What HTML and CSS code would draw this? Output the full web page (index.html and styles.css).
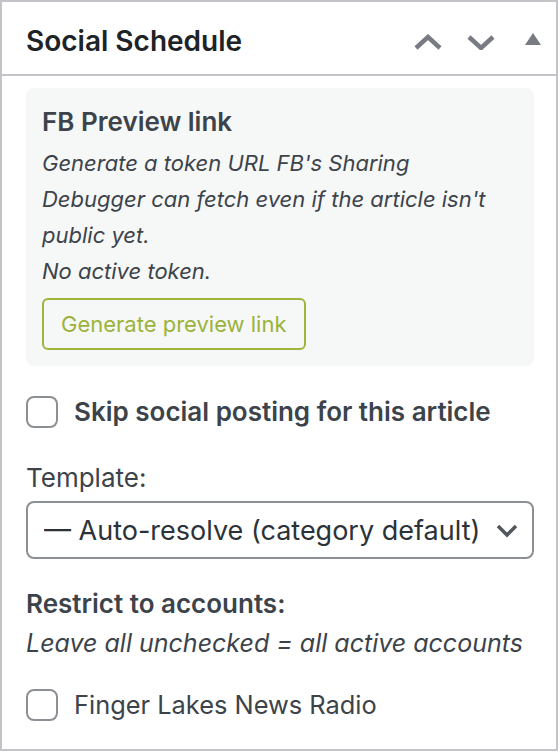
FILE: index.html
```html
<!DOCTYPE html>
<html lang="en">
<head>
    <meta charset="utf-8" />
    <meta name="viewport" content="width=device-width, initial-scale=1" />
    <title>Social Schedule</title>
    <link rel="stylesheet" href="styles.css">
</head>
<body>
    <div class="postbox">
        <div class="postbox-header">
            <h2 class="hndle">Social Schedule</h2>
            <div class="handle-actions">
                <svg class="icon-chev" width="30" height="16" viewBox="0 0 30 16"><polyline points="3,14 15,3 27,14" /></svg>
                <svg class="icon-chev" width="30" height="16" viewBox="0 0 30 16"><polyline points="3,3 15,14 27,3" /></svg>
                <svg class="icon-tri" width="16" height="13" viewBox="0 0 16 13"><polygon points="8,0 16,12 0,12" /></svg>
            </div>
        </div>
        <div class="inside">
            <div class="preview-panel">
                <h4 class="panel-title">FB Preview link</h4>
                <p class="desc">Generate a token URL FB's Sharing Debugger can fetch even if the article isn't public yet.</p>
                <p class="desc">No active token.</p>
                <button type="button" class="btn-preview">Generate preview link</button>
            </div>

            <label class="check-row skip-row">
                <input type="checkbox" name="skip_social">
                <span class="skip-label">Skip social posting for this article</span>
            </label>

            <label class="field-label" for="template">Template:</label>
            <div class="select-wrap">
                <select id="template" name="template">
                    <option>— Auto-resolve (category default)</option>
                </select>
                <svg class="select-arrow" width="22" height="14" viewBox="0 0 22 14"><polyline points="2,2 11,11 20,2" /></svg>
            </div>

            <p class="section-label">Restrict to accounts:</p>
            <p class="desc desc-accounts">Leave all unchecked = all active accounts</p>

            <label class="check-row account-row">
                <input type="checkbox" name="accounts[]" value="flnr">
                <span>Finger Lakes News Radio</span>
            </label>
        </div>
    </div>
</body>
</html>
```

FILE: styles.css
```css
body {
    margin: 0;
    background-color: #fff;
    color: #1d2327;
    font-family: Inter, "Open Sans", sans-serif;
}

.postbox {
    width: 558px;
    height: 751px;
    box-sizing: border-box;
    border: 2px solid #c3c4c7;
    background-color: #fff;
}

.postbox-header {
    display: flex;
    align-items: center;
    justify-content: space-between;
    box-sizing: border-box;
    height: 74px;
    padding: 5px 15px 0 24px;
    border-bottom: 2px solid #c3c4c7;
}

.hndle {
    margin: 0;
    font-size: 28px;
    font-weight: 600;
    line-height: 40px;
    color: #1d2327;
}

.handle-actions {
    display: flex;
    align-items: center;
    padding-top: 2px;
}

.icon-chev {
    fill: none;
    stroke: #787c82;
    stroke-width: 4.5;
}

.icon-chev + .icon-chev {
    margin-left: 23px;
}

.icon-tri {
    fill: #787c82;
    margin-left: 29px;
    margin-top: -5px;
}

.inside {
    padding: 12px 22px 24px 24px;
}

.preview-panel {
    background-color: #f6f7f7;
    border-radius: 8px;
    padding: 16px;
    color: #3c434a;
}

.panel-title {
    margin: 0 0 5px;
    font-size: 26px;
    font-weight: 600;
    line-height: 36px;
}

.desc {
    margin: 0;
    font-size: 22px;
    font-style: italic;
    line-height: 36px;
}

.btn-preview {
    display: block;
    margin-top: 9px;
    height: 52px;
    padding: 0 17px;
    border: 2px solid #a0b43c;
    border-radius: 6px;
    background-color: #f6f7f7;
    color: #9cb33b;
    font-family: inherit;
    font-size: 22px;
    cursor: pointer;
}

.check-row {
    display: flex;
    align-items: center;
    gap: 16px;
    color: #3c434a;
    font-size: 26px;
    line-height: 32px;
}

.check-row input {
    appearance: none;
    width: 32px;
    height: 32px;
    margin: 0;
    border: 2px solid #8c8f94;
    border-radius: 8px;
    background-color: #fff;
}

.skip-row {
    margin-top: 30px;
}

.skip-label {
    font-weight: 600;
}

.field-label {
    display: block;
    margin-top: 32px;
    color: #3c434a;
    font-size: 26px;
    line-height: 36px;
}

.select-wrap {
    position: relative;
    margin-top: 5px;
}

.select-wrap select {
    appearance: none;
    display: block;
    width: 100%;
    height: 58px;
    padding: 0 44px 0 16px;
    border: 2px solid #8c8f94;
    border-radius: 8px;
    background-color: #fff;
    color: #2c3338;
    font-family: inherit;
    font-size: 27px;
}

.select-arrow {
    position: absolute;
    right: 16px;
    top: 23px;
    fill: none;
    stroke: #50575e;
    stroke-width: 3.5;
}

.section-label {
    margin: 27px 0 0;
    color: #3c434a;
    font-size: 26px;
    font-weight: 600;
    line-height: 36px;
}

.desc-accounts {
    margin-top: 3px;
    font-size: 25px;
    color: #3c434a;
}

.account-row {
    margin-top: 28px;
    font-size: 25.4px;
}
```
